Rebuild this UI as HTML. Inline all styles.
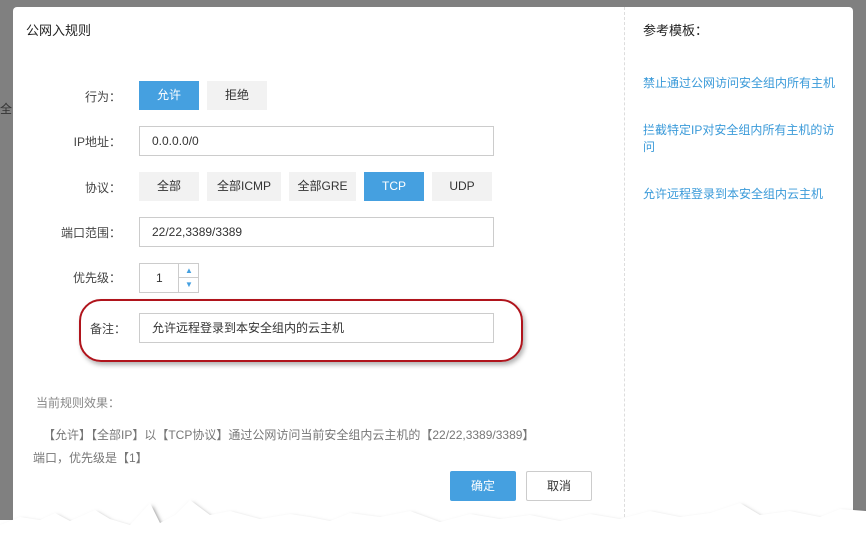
<!DOCTYPE html>
<html><head><meta charset="utf-8"><style>
body{margin:0;width:866px;height:541px;overflow:hidden;background:#fff;font-family:"Liberation Sans","Noto Sans CJK SC",sans-serif;font-size:12px;color:#333;position:relative}
.bg{position:absolute;left:0;top:0;width:866px;height:520px;background:#808080}
.modal{position:absolute;left:13px;top:7px;width:840px;height:520px;background:#fff;border-radius:4px 4px 0 0}
.a{position:absolute}
.lbl{position:absolute;width:108px;text-align:right;color:#444}
.btn{position:absolute;height:29px;line-height:29px;text-align:center;background:#f2f2f2;color:#333}
.on{background:#45a0e0;color:#fff}
.inp{position:absolute;border:1px solid #ccc;height:28px;line-height:28px;padding-left:12px;box-sizing:border-box;height:30px}
.link{color:#3a9ad9;position:absolute;left:630px}
</style></head><body>
<div class="bg"></div>
<div class="a" style="left:0;top:100px;color:#333;font-size:12px">全</div>
<div class="modal">
<div class="a" style="left:13px;top:13px;font-size:13px;color:#222">公网入规则</div>
<div class="a" style="left:611px;top:0;height:520px;border-left:1px dashed #ddd"></div>
<div class="a" style="left:630px;top:13px;font-size:13px;color:#222">参考模板：</div>
<div class="link" style="top:67px">禁止通过公网访问安全组内所有主机</div>
<div class="link" style="top:115px;width:195px;line-height:17px">拦截特定IP对安全组内所有主机的访问</div>
<div class="link" style="top:178px">允许远程登录到本安全组内云主机</div>

<div class="lbl" style="left:0;top:81px">行为：</div>
<div class="btn on" style="left:126px;top:74px;width:60px">允许</div>
<div class="btn" style="left:194px;top:74px;width:60px">拒绝</div>
<div class="lbl" style="left:0;top:126px">IP地址：</div>
<div class="inp" style="left:126px;top:119px;width:355px">0.0.0.0/0</div>
<div class="lbl" style="left:0;top:172px">协议：</div>
<div class="btn" style="left:126px;top:165px;width:60px">全部</div>
<div class="btn" style="left:194px;top:165px;width:74px">全部ICMP</div>
<div class="btn" style="left:276px;top:165px;width:67px">全部GRE</div>
<div class="btn on" style="left:351px;top:165px;width:60px">TCP</div>
<div class="btn" style="left:419px;top:165px;width:60px">UDP</div>
<div class="lbl" style="left:0;top:217px">端口范围：</div>
<div class="inp" style="left:126px;top:210px;width:355px">22/22,3389/3389</div>
<div class="lbl" style="left:0;top:262px">优先级：</div>
<div class="inp" style="left:126px;top:256px;width:60px;padding:0"><span style="position:absolute;left:16px">1</span><div style="position:absolute;left:38px;top:0;width:20px;height:28px;border-left:1px solid #ccc"><div style="border-bottom:1px solid #ccc;height:13px;text-align:center;color:#45a0e0;font-size:8px;line-height:13px">▲</div><div style="text-align:center;color:#45a0e0;font-size:8px;line-height:14px">▼</div></div></div>
<div class="a" style="left:66px;top:292px;width:440px;height:59px;border:2px solid #b0141c;border-radius:22px;box-shadow:2px 3px 5px rgba(0,0,0,.3)"></div>
<div class="lbl" style="left:0;top:313px;width:113px">备注：</div>
<div class="inp" style="left:126px;top:306px;width:355px">允许远程登录到本安全组内的云主机</div>
<div class="a" style="left:23px;top:387px;color:#888">当前规则效果：</div>
<div class="a" style="left:30px;top:419px;color:#777">【允许】【全部IP】以【TCP协议】通过公网访问当前安全组内云主机的【22/22,3389/3389】</div>
<div class="a" style="left:20px;top:442px;color:#777">端口，优先级是【1】</div>
<div class="btn on" style="left:437px;top:464px;width:66px;height:30px;line-height:30px;border-radius:2px">确定</div>
<div class="btn" style="left:513px;top:464px;width:64px;height:28px;background:#fff;border:1px solid #ccc;border-radius:2px">取消</div>
</div>
<svg class="a" style="left:0;top:495px" width="866" height="46"><polygon fill="#fff" points="0,30 20,22 40,25 55,18 70,26 95,15 110,24 130,30 150,8 160,28 175,20 190,5 210,20 230,16 260,24 290,19 310,22 330,26 350,18 380,22 410,16 440,27 470,19 500,24 530,20 560,26 590,19 620,24 650,16 680,22 710,18 740,8 760,20 790,16 820,22 840,14 866,16 866,46 0,46" style="filter:drop-shadow(2px 3px 2px rgba(0,0,0,.5))"/></svg>
</body></html>
